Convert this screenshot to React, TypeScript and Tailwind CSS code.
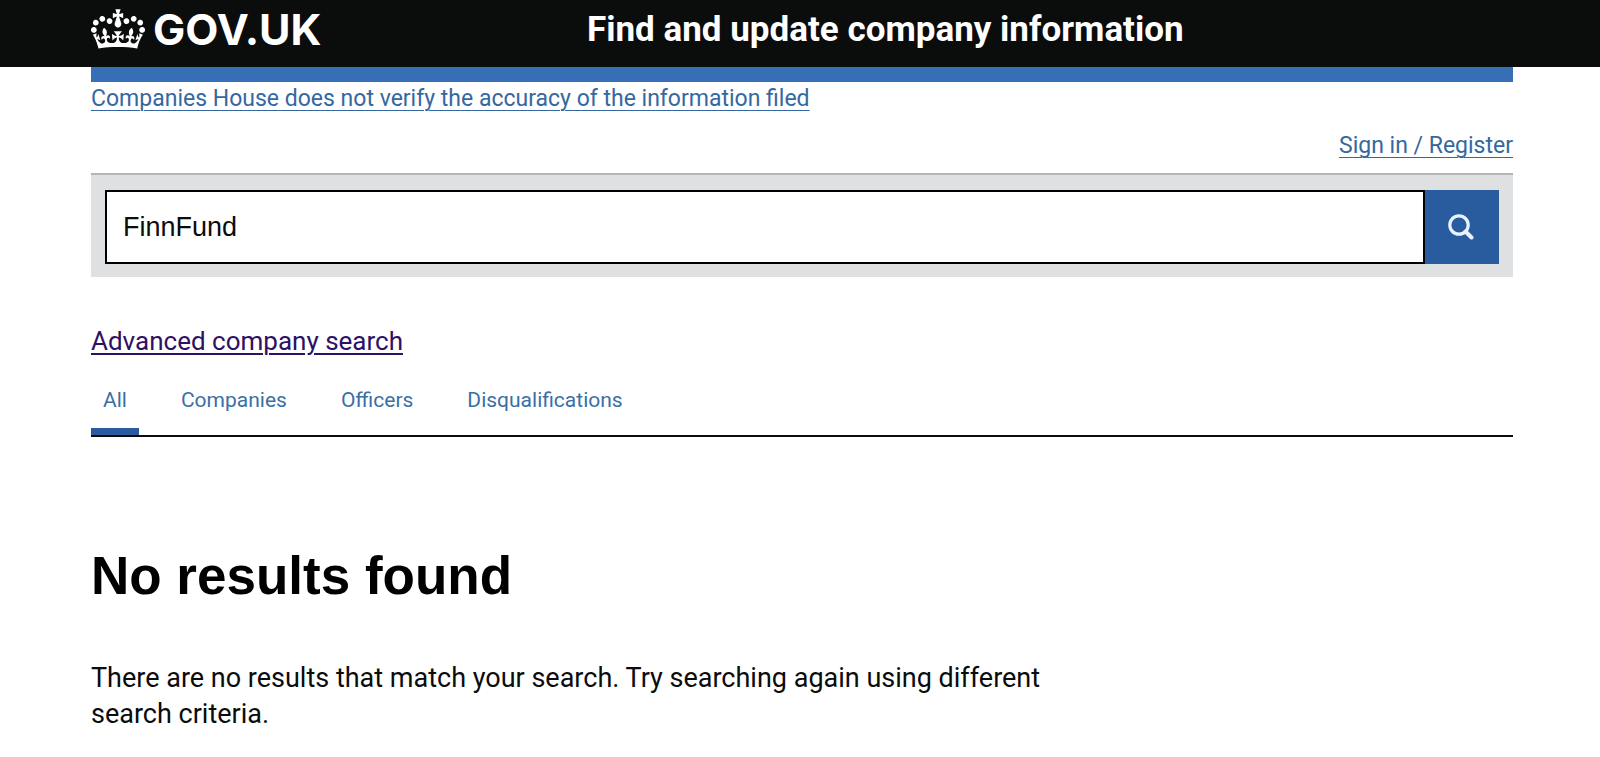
import { useState } from "react";

const TABS = [
  { label: "All", href: "#all", active: true },
  { label: "Companies", href: "#companies", active: false },
  { label: "Officers", href: "#officers", active: false },
  { label: "Disqualifications", href: "#disqualifications", active: false },
];

function CrownIcon() {
  return (
    <svg aria-hidden="true" focusable="false" viewBox="0 0 132 97" className="h-10 w-[54px] shrink-0" fill="currentColor">
      <path d="M25 30.2c3.5 1.5 7.7-.2 9.1-3.7 1.5-3.6-.2-7.8-3.9-9.2-3.6-1.4-7.6.3-9.1 3.9-1.4 3.5.3 7.5 3.9 9zM9 39.5c3.6 1.5 7.8-.2 9.2-3.7 1.5-3.6-.2-7.8-3.9-9.1-3.6-1.5-7.6.2-9.1 3.8-1.4 3.5.3 7.5 3.8 9zM4.4 57.2c3.5 1.5 7.7-.2 9.1-3.8 1.5-3.6-.2-7.7-3.9-9.1-3.5-1.5-7.6.3-9.1 3.8-1.4 3.5.3 7.6 3.9 9.1zm38.3-21.4c3.5 1.5 7.7-.2 9.1-3.8 1.5-3.6-.2-7.7-3.9-9.1-3.6-1.5-7.6.3-9.1 3.8-1.3 3.6.4 7.7 3.9 9.1zm64.4-5.6c-3.6 1.5-7.8-.2-9.1-3.7-1.5-3.6.2-7.8 3.8-9.2 3.6-1.4 7.7.3 9.2 3.9 1.3 3.5-.4 7.5-3.9 9zm15.9 9.3c-3.6 1.5-7.7-.2-9.1-3.7-1.5-3.6.2-7.8 3.7-9.1 3.6-1.5 7.7.2 9.2 3.8 1.5 3.5-.3 7.5-3.8 9zm4.7 17.7c-3.6 1.5-7.8-.2-9.2-3.8-1.5-3.6.2-7.7 3.9-9.1 3.6-1.5 7.7.3 9.2 3.8 1.3 3.5-.4 7.6-3.9 9.1zM89.3 35.8c-3.6 1.5-7.8-.2-9.2-3.8-1.4-3.6.2-7.7 3.9-9.1 3.6-1.5 7.7.3 9.2 3.8 1.4 3.6-.3 7.7-3.9 9.1zM69.7 17.7l8.9 4.7V9.3l-8.9 2.8c-.2-.3-.5-.6-.9-.9L72.4 0H59.6l3.5 11.2c-.3.3-.6.5-.9.9l-8.8-2.8v13.1l8.8-4.7c.3.3.6.7.9.9l-5 15.4v.1c-.2.8-.4 1.6-.4 2.4 0 4.1 3.1 7.5 7 8.1h.2c.3 0 .7.1 1 .1.4 0 .7 0 1-.1h.2c4-.6 7.1-4.1 7.1-8.1 0-.8-.1-1.7-.4-2.4V34l-5.1-15.4c.4-.2.7-.6 1-.9zM66 92.8c16.9 0 32.8 1.1 47.1 3.2 4-16.9 8.9-26.7 14-33.5l-9.6-3.4c1 4.9 1.1 7.2 0 10.2-1.5-1.4-3-4.3-4.2-8.7L108.6 76c2.8-2 5-3.2 7.5-3.3-4.4 9.4-10 11.9-13.6 11.2-4.3-.8-6.3-4.6-5.6-7.9 1-4.7 5.7-5.9 8-.5 4.3-8.7-3-11.4-7.6-8.8 7.1-7.2 7.9-13.5 2.1-21.1-8 6.1-8.1 12.3-4.5 20.8-4.7-5.4-12.1-2.5-9.5 6.2 3.4-5.2 7.9-2 7.2 3.1-.6 4.3-6.4 7.8-13.5 7.2-10.3-.9-10.9-8-11.2-13.8 2.5-.5 7.1 1.8 11 7.3L80.2 60c-4.1 4.4-8 5.3-12.3 5.4 1.4-4.4 8-11.6 8-11.6H55.5s6.4 7.2 7.9 11.6c-4.2-.1-8-1-12.3-5.4l1.4 16.4c3.9-5.5 8.5-7.7 10.9-7.3-.3 5.8-.9 12.8-11.1 13.8-7.2.6-12.9-2.9-13.5-7.2-.7-5 3.8-8.3 7.1-3.1 2.7-8.7-4.6-11.6-9.4-6.2 3.7-8.5 3.6-14.7-4.6-20.8-5.8 7.6-5 13.9 2.2 21.1-4.7-2.6-11.9.1-7.7 8.8 2.3-5.5 7.1-4.2 8.1.5.7 3.3-1.3 7.1-5.7 7.9-3.5.7-9-1.8-13.5-11.2 2.5.1 4.7 1.3 7.5 3.3l-4.7-15.4c-1.2 4.4-2.7 7.2-4.3 8.7-1.1-3-.9-5.3 0-10.2l-9.5 3.4c5 6.9 9.9 16.7 14 33.5 14.8-2.1 30.8-3.2 47.7-3.2z" />
    </svg>
  );
}

function SearchIcon() {
  return (
    <svg aria-hidden="true" viewBox="0 0 26 26" className="h-[26px] w-[26px]" fill="none" stroke="currentColor">
      <circle cx="11" cy="11" r="9.2" strokeWidth="3.2" />
      <path d="M17.5 17.5l6 6" strokeWidth="4" strokeLinecap="round" />
    </svg>
  );
}

function Header() {
  return (
    <header className="bg-[#0b0c0c] pr-[87px] pl-[91px] text-white">
      <div className="flex h-[67px] items-start pt-2">
        <a
          href="#home"
          className="flex w-[496px] items-center gap-2 font-['Inter',Arial,sans-serif] text-[43px] leading-[42px] font-bold"
        >
          <CrownIcon />
          GOV.UK
        </a>
        <a href="#service" className="text-[35px] leading-11 font-bold">
          Find and update company information
        </a>
      </div>
    </header>
  );
}

function SearchForm() {
  const [query, setQuery] = useState("FinnFund");

  return (
    <form
      role="search"
      onSubmit={(event) => event.preventDefault()}
      className="flex border-t-2 border-[#b4b5b6] bg-[#dee0e2] px-[14px] pt-[15px] pb-[13px]"
    >
      <input
        type="text"
        aria-label="Search for companies or officers"
        value={query}
        onChange={(event) => setQuery(event.target.value)}
        className="h-[74px] min-w-0 flex-1 border-2 border-black bg-white px-4 font-['Liberation_Sans',Arial,sans-serif] text-[27px] text-[#0b0c0c] outline-none"
      />
      <button
        type="submit"
        aria-label="Search"
        className="flex size-[74px] items-center justify-center bg-[#285c9f] pr-[2px] text-[#e8f3ff]"
      >
        <SearchIcon />
      </button>
    </form>
  );
}

export default function App() {
  return (
    <div className="bg-white font-['Roboto',Arial,sans-serif] text-[#0b0c0c]">
      <Header />

      <div className="pr-[87px] pl-[91px]">
        <div className="h-[15px] bg-[#376fb6]" />

        <div className="text-[23px] leading-[34px] text-[#3568a0]">
          <a href="#accuracy" className="underline decoration-1 underline-offset-4">
            Companies House does not verify the accuracy of the information filed
          </a>
        </div>

        <div className="mt-[13px] flex justify-end text-[23px] leading-[34px] text-[#3568a0]">
          <a href="#signin" className="underline decoration-1 underline-offset-4">
            Sign in / Register
          </a>
        </div>

        <main className="mt-[10px]">
          <SearchForm />

          <div className="mt-[46px] text-[26px] leading-9">
            <a href="#advanced" className="text-[#2e1065] underline decoration-2 underline-offset-3">
              Advanced company search
            </a>
          </div>

          <nav aria-label="Search results" className="mt-[23px] border-b-2 border-[#0b0c0c]">
            <ul className="flex gap-[30px] text-[21px] leading-9">
              {TABS.map((tab) => (
                <li key={tab.label}>
                  <a
                    href={tab.href}
                    aria-current={tab.active ? "page" : undefined}
                    className={
                      tab.active
                        ? "block border-b-[7px] border-[#285c9f] px-3 pb-[10px] text-[#3b6fa5]"
                        : "block border-b-[7px] border-transparent px-3 pb-[10px] text-[#3b6fa5]"
                    }
                  >
                    {tab.label}
                  </a>
                </li>
              ))}
            </ul>
          </nav>

          <h1 className="mt-[109px] font-['Liberation_Sans',Arial,sans-serif] text-[53px] leading-[60px] font-bold text-black">
            No results found
          </h1>

          <p className="mt-[54px] max-w-[960px] text-[27px] leading-9">
            There are no results that match your search. Try searching again using different search criteria.
          </p>
        </main>
      </div>
    </div>
  );
}
